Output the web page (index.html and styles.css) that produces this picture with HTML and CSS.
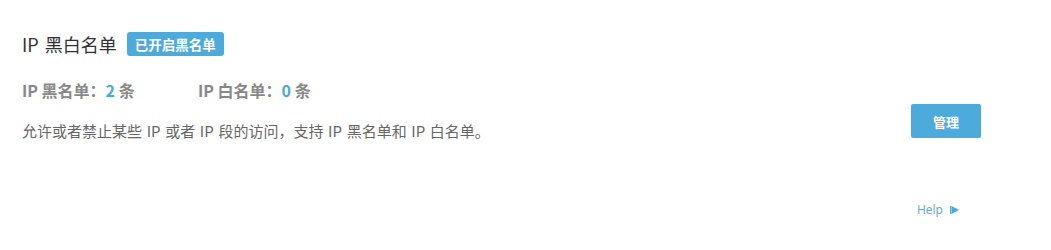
FILE: index.html
```html
<!DOCTYPE html>
<html lang="zh">
<head>
<meta charset="utf-8">
<link rel="stylesheet" href="styles.css">
</head>
<body>
<div class="card">
  <div class="main">
    <div class="title-row">
      <h2 class="title">IP 黑白名单</h2>
      <span class="badge">已开启黑名单</span>
    </div>
    <div class="stats">
      <span class="stat">IP 黑名单：<em>2</em> 条</span>
      <span class="stat">IP 白名单：<em>0</em> 条</span>
    </div>
    <p class="desc">允许或者禁止某些 IP 或者 IP 段的访问，支持 IP 黑名单和 IP 白名单。</p>
  </div>
  <div class="side">
    <button class="btn">管理</button>
    <a class="help" href="#">Help <svg class="arrow" width="9" height="8" viewBox="0 0 9 8"><rect x="0" y="0" width="1.2" height="8" fill="#4aa8dc"/><path d="M1.5 0 L9 4 L1.5 8 Z" fill="#4aa8dc"/></svg></a>
  </div>
</div>
</body>
</html>
```

FILE: styles.css
```css
html, body {
  margin: 0;
  padding: 0;
  background: #fff;
}
body {
  font-family: "Noto Sans CJK SC", "Noto Sans", sans-serif;
  color: #333;
}
.card {
  display: flex;
  padding: 32px 70px 0 22px;
}
.main {
  flex: 1;
}
.title-row {
  display: flex;
  align-items: center;
  height: 24px;
}
.title {
  margin: 0;
  font-size: 18px;
  font-weight: normal;
  color: #333;
  line-height: 24px;
  word-spacing: 2px;
}
.badge {
  margin-left: 10px;
  height: 24px;
  line-height: 24px;
  padding: 0 8px;
  background: #4dabdb;
  color: #fff;
  font-size: 13.5px;
  font-weight: bold;
  border-radius: 3px;
}
.stats {
  display: flex;
  margin-top: 22px;
  height: 24px;
  line-height: 24px;
  font-size: 16px;
  font-weight: bold;
  color: #888;
}
.stat {
  width: 176px;
}
.stat em {
  font-style: normal;
  color: #4aa8dc;
}
.desc {
  margin: 19px 0 0;
  font-size: 15px;
  line-height: 20px;
  color: #666;
  word-spacing: 1.3px;
}
.side {
  display: flex;
  flex-direction: column;
  align-items: flex-start;
  padding-top: 72px;
}
.btn {
  width: 70px;
  height: 34px;
  border: none;
  border-radius: 2px;
  background: #4dabdb;
  color: #fff;
  font-family: inherit;
  font-size: 13px;
  font-weight: bold;
  padding: 0;
}
.help {
  margin: 64px 0 0 6px;
  display: flex;
  align-items: center;
  gap: 7px;
  font-family: "Open Sans", "Noto Sans", sans-serif;
  font-size: 12px;
  line-height: 16px;
  color: #5aa6e0;
  text-decoration: none;
}
.arrow {
  display: block;
}
```
